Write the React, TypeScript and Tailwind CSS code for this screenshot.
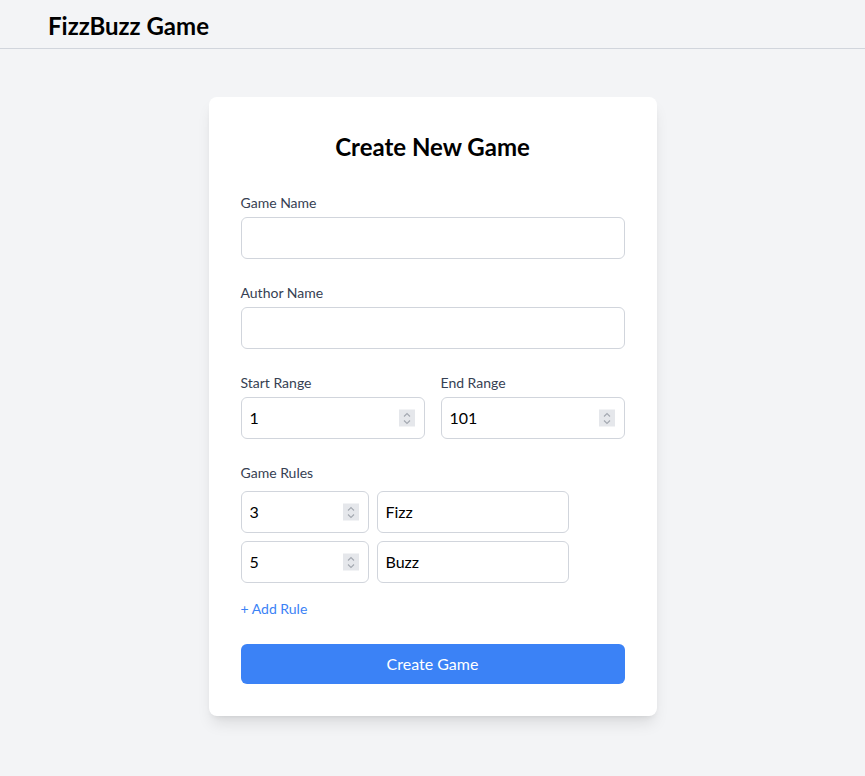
function Spinner() {
  return (
    <span className="pointer-events-none absolute right-[10px] top-1/2 flex h-[17px] w-[16px] -translate-y-1/2 flex-col items-center justify-center bg-[#e5e7eb]">
      <svg width="10" height="14" viewBox="0 0 10 14" fill="none" stroke="#a3a8b0" strokeWidth="1.1">
        <path d="M2 5 L5 2 L8 5" />
        <path d="M2 9 L5 12 L8 9" />
      </svg>
    </span>
  );
}

function NumberField({ value, className }: { value: number; className: string }) {
  return (
    <div className={"relative " + className}>
      <input
        className="w-full appearance-none rounded-md border border-gray-300 bg-white px-2 py-2 text-base text-black outline-none [&::-webkit-inner-spin-button]:appearance-none"
        type="number"
        defaultValue={value}
      />
      <Spinner />
    </div>
  );
}

export default function App() {
  const input =
    "w-full rounded-md border border-gray-300 bg-white px-2 py-2 text-base text-black outline-none";
  return (
    <div className="min-h-screen bg-[#f3f4f6] font-['Lato',sans-serif]">
      <header className="flex h-[49px] items-center border-b border-gray-300 px-12">
        <h1 className="pt-[3px] text-2xl font-bold text-black">FizzBuzz Game</h1>
      </header>
      <main className="flex justify-center pt-12 pb-12">
        <div className="w-[448px] rounded-lg bg-white p-8 shadow-lg">
          <h2 className="mb-[30px] mt-0.5 text-center text-2xl font-bold text-black">Create New Game</h2>
          <form className="space-y-6">
            <div>
              <label className="mb-1 block text-sm text-gray-700">Game Name</label>
              <input className={input} type="text" />
            </div>
            <div>
              <label className="mb-1 block text-sm text-gray-700">Author Name</label>
              <input className={input} type="text" />
            </div>
            <div className="grid grid-cols-2 gap-4">
              <div>
                <label className="mb-1 block text-sm text-gray-700">Start Range</label>
                <NumberField value={1} className="w-full" />
              </div>
              <div>
                <label className="mb-1 block text-sm text-gray-700">End Range</label>
                <NumberField value={101} className="w-full" />
              </div>
            </div>
            <div>
              <label className="mb-2 block text-sm text-gray-700">Game Rules</label>
              <div className="space-y-2">
                {[
                  { n: 3, w: "Fizz" },
                  { n: 5, w: "Buzz" },
                ].map((r) => (
                  <div key={r.w} className="flex gap-2">
                    <NumberField value={r.n} className="w-32" />
                    <input
                      className="w-48 rounded-md border border-gray-300 px-2 py-2 text-base text-black outline-none"
                      type="text"
                      defaultValue={r.w}
                    />
                  </div>
                ))}
              </div>
              <button type="button" className="mt-4 text-sm text-[#3b82f6]">
                + Add Rule
              </button>
            </div>
            <button
              type="button"
              className="h-10 w-full rounded-md bg-[#3b82f6] text-base text-white"
            >
              Create Game
            </button>
          </form>
        </div>
      </main>
    </div>
  );
}
